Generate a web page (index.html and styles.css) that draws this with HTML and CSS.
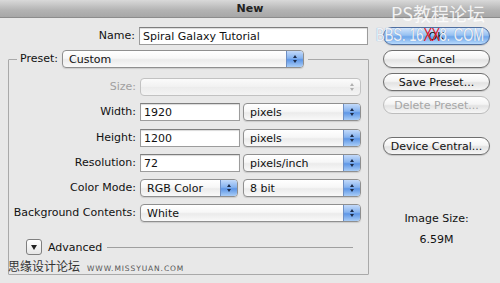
FILE: index.html
```html
<!DOCTYPE html>
<html lang="en">
<head>
    <meta charset="UTF-8">
    <meta name="viewport" content="width=device-width, initial-scale=1.0">
    <title>New</title>
    <link rel="stylesheet" href="styles.css">
</head>
<body>
    <div class="dialog">
        <div class="titlebar">New</div>
        <div class="content">
            <div class="main">
                <div class="name-row">
                    <span class="label name-label">Name:</span>
                    <div class="text name-input">Spiral Galaxy Tutorial</div>
                </div>
                <fieldset class="group">
                    <legend class="preset">
                        <span class="label">Preset:</span>
                        <div class="select preset-select">Custom<span class="cap"><span class="up"></span><span class="down"></span></span></div>
                    </legend>
                    <div class="rows">
                        <span class="label disabled">Size:</span>
                        <div class="select off"><span class="cap"><span class="up"></span><span class="down"></span></span></div>

                        <span class="label">Width:</span>
                        <div class="pair">
                            <div class="text num">1920</div>
                            <div class="select unit">pixels<span class="cap"><span class="up"></span><span class="down"></span></span></div>
                        </div>

                        <span class="label">Height:</span>
                        <div class="pair">
                            <div class="text num">1200</div>
                            <div class="select unit">pixels<span class="cap"><span class="up"></span><span class="down"></span></span></div>
                        </div>

                        <span class="label">Resolution:</span>
                        <div class="pair">
                            <div class="text num">72</div>
                            <div class="select unit">pixels/inch<span class="cap"><span class="up"></span><span class="down"></span></span></div>
                        </div>

                        <span class="label">Color Mode:</span>
                        <div class="pair">
                            <div class="select mode">RGB Color<span class="cap"><span class="up"></span><span class="down"></span></span></div>
                            <div class="select unit">8 bit<span class="cap"><span class="up"></span><span class="down"></span></span></div>
                        </div>

                        <span class="label">Background Contents:</span>
                        <div class="select">White<span class="cap"><span class="up"></span><span class="down"></span></span></div>
                    </div>
                    <div class="advanced">
                        <span class="disclose"><span class="tri"></span></span>
                        <span class="adv-text">Advanced</span>
                        <span class="rule"></span>
                    </div>
                </fieldset>
            </div>
            <div class="side">
                <div class="btn default">OK</div>
                <div class="btn">Cancel</div>
                <div class="btn">Save Preset...</div>
                <div class="btn dim">Delete Preset...</div>
                <div class="btn central">Device Central...</div>
                <div class="size-label">Image Size:</div>
                <div class="size-value">6.59M</div>
            </div>
        </div>
        <div class="mark-top">PS教程论坛</div>
        <div class="mark-bbs">BBS. 16<span class="red">XX</span>8. COM</div>
        <div class="mark-bottom">思缘设计论坛<span class="url">WWW.MISSYUAN.COM</span></div>
    </div>
</body>
</html>
```

FILE: styles.css
```css
body {
    margin: 0;
    width: 500px;
    height: 283px;
    overflow: hidden;
    background-color: #e8e8e8;
    font-family: "DejaVu Sans", Verdana, sans-serif;
    font-size: 11px;
    color: #111;
}

.dialog {
    position: relative;
    width: 500px;
    height: 283px;
}

.titlebar {
    height: 17px;
    line-height: 18px;
    text-align: center;
    font-weight: bold;
    font-size: 11px;
    color: #222;
    background: linear-gradient(#d9d9d9, #b3b3b3 60%, #a7a7a7);
    border-bottom: 1px solid #8c8c8c;
}

.content {
    display: flex;
    padding-top: 9px;
}

.main {
    width: 361px;
    padding-left: 8px;
}

.label {
    text-align: right;
    white-space: nowrap;
    line-height: 18px;
}

.label.disabled {
    color: #a0a0a0;
}

.name-row {
    display: flex;
    margin-left: -8px;
}

.name-label {
    width: 135px;
    margin-right: 4px;
}

.text {
    height: 16px;
    line-height: 17px;
    padding-left: 3px;
    background-color: #fff;
    border: 1px solid #9c9c9c;
    border-top-color: #7e7e7e;
    box-shadow: inset 0 1px 1px rgba(0, 0, 0, 0.15);
    white-space: nowrap;
    overflow: hidden;
}

.name-input {
    width: 224px;
}

.group {
    margin: 5px 0 0 0;
    padding: 0 7px 19px 0;
    border: 1px solid #a9a9a9;
    border-radius: 1px;
    min-width: 0;
}

.preset {
    display: flex;
    align-items: center;
    padding: 0 4px 0 3px;
    margin-left: 8px;
}

.preset .label {
    margin-right: 4px;
}

.select {
    position: relative;
    height: 16px;
    line-height: 17px;
    padding-left: 6px;
    border: 1px solid #8f8f8f;
    border-radius: 4px;
    background: linear-gradient(#ffffff, #f7f7f7 45%, #ebebeb 55%, #f9f9f9);
    box-shadow: 0 1px 1px rgba(0, 0, 0, 0.12);
    white-space: nowrap;
}

.cap {
    position: absolute;
    top: 0;
    right: 0;
    bottom: 0;
    width: 16px;
    border-left: 1px solid #6e8fc4;
    border-radius: 0 3px 3px 0;
    background: linear-gradient(#c3dafa, #86b3ef 45%, #5e96e6 55%, #a9cdf7);
    display: flex;
    flex-direction: column;
    align-items: center;
    justify-content: center;
    gap: 2px;
}

.up,
.down {
    width: 0;
    height: 0;
    border-left: 2.5px solid transparent;
    border-right: 2.5px solid transparent;
}

.up {
    border-bottom: 3px solid #1c2c4a;
}

.down {
    border-top: 3px solid #1c2c4a;
}

.preset-select {
    width: 234px;
}

.select.off {
    border-color: #c2c2c2;
    box-shadow: none;
    background: linear-gradient(#fbfbfb, #f1f1f1 50%, #ececec 51%, #f4f4f4);
}

.select.off .cap {
    background: none;
    border-left: none;
}

.select.off .up {
    border-bottom-color: #b0b0b0;
}

.select.off .down {
    border-top-color: #b0b0b0;
}

.rows {
    display: grid;
    grid-template-columns: 1fr 221px;
    grid-auto-rows: 18px;
    column-gap: 4px;
    row-gap: 7.25px;
    padding-top: 10px;
}

.pair {
    display: flex;
    justify-content: space-between;
}

.num {
    width: 95px;
}

.unit {
    width: 110px;
}

.mode {
    width: 90px;
}

.advanced {
    display: flex;
    align-items: center;
    margin: 17px 0 0 17px;
}

.disclose {
    width: 14px;
    height: 14px;
    border: 1px solid #7f7f7f;
    border-radius: 3px;
    background: linear-gradient(#ffffff, #e6e6e6);
    display: flex;
    align-items: center;
    justify-content: center;
}

.tri {
    width: 0;
    height: 0;
    border-left: 3.5px solid transparent;
    border-right: 3.5px solid transparent;
    border-top: 5px solid #222;
}

.adv-text {
    margin-left: 6px;
}

.rule {
    flex: 1;
    height: 1px;
    margin: 0 8px 0 5px;
    background-color: #9f9f9f;
}

.side {
    width: 107px;
    margin-left: 14px;
    display: flex;
    flex-direction: column;
    gap: 5px;
}

.btn {
    height: 16px;
    line-height: 17px;
    text-align: center;
    border: 1px solid #6f6f6f;
    border-radius: 9px;
    background: linear-gradient(#ffffff, #f4f4f4 45%, #e3e3e3 55%, #f6f6f6);
    box-shadow: 0 1px 1px rgba(0, 0, 0, 0.15);
}

.btn.default {
    border-color: #4f6e9f;
    background: linear-gradient(#d3e6fc, #97c1f2 45%, #6ea6ea 55%, #b8dafc);
}

.btn.dim {
    color: #a6a6a6;
    border-color: #bdbdbd;
    box-shadow: none;
}

.btn.central {
    margin-top: 18px;
}

.size-label {
    margin-top: 52px;
    text-align: center;
}

.size-value {
    margin-top: 3px;
    text-align: center;
}

.mark-top {
    position: absolute;
    left: 391px;
    top: 2px;
    font-family: "Noto Sans CJK SC", sans-serif;
    font-size: 18px;
    line-height: 22px;
    color: rgba(255, 255, 255, 0.85);
}

.mark-bbs {
    position: absolute;
    left: 376px;
    top: 25px;
    font-family: "Liberation Sans", sans-serif;
    font-size: 18px;
    line-height: 20px;
    color: rgba(255, 255, 255, 0.9);
    text-shadow: 0 0 1px #6c8fc2;
    white-space: nowrap;
    transform: scaleX(0.72);
    transform-origin: left top;
}

.mark-bbs .red {
    color: #e0202a;
    text-shadow: none;
    letter-spacing: -1px;
}

.mark-bottom {
    position: absolute;
    left: 8px;
    top: 258px;
    font-family: "Noto Sans CJK SC", sans-serif;
    font-size: 12px;
    line-height: 16px;
    color: #333;
    white-space: nowrap;
}

.mark-bottom .url {
    margin-left: 7px;
    font-family: "DejaVu Sans", sans-serif;
    font-size: 7.5px;
    color: #555;
    letter-spacing: 0.9px;
}
```
